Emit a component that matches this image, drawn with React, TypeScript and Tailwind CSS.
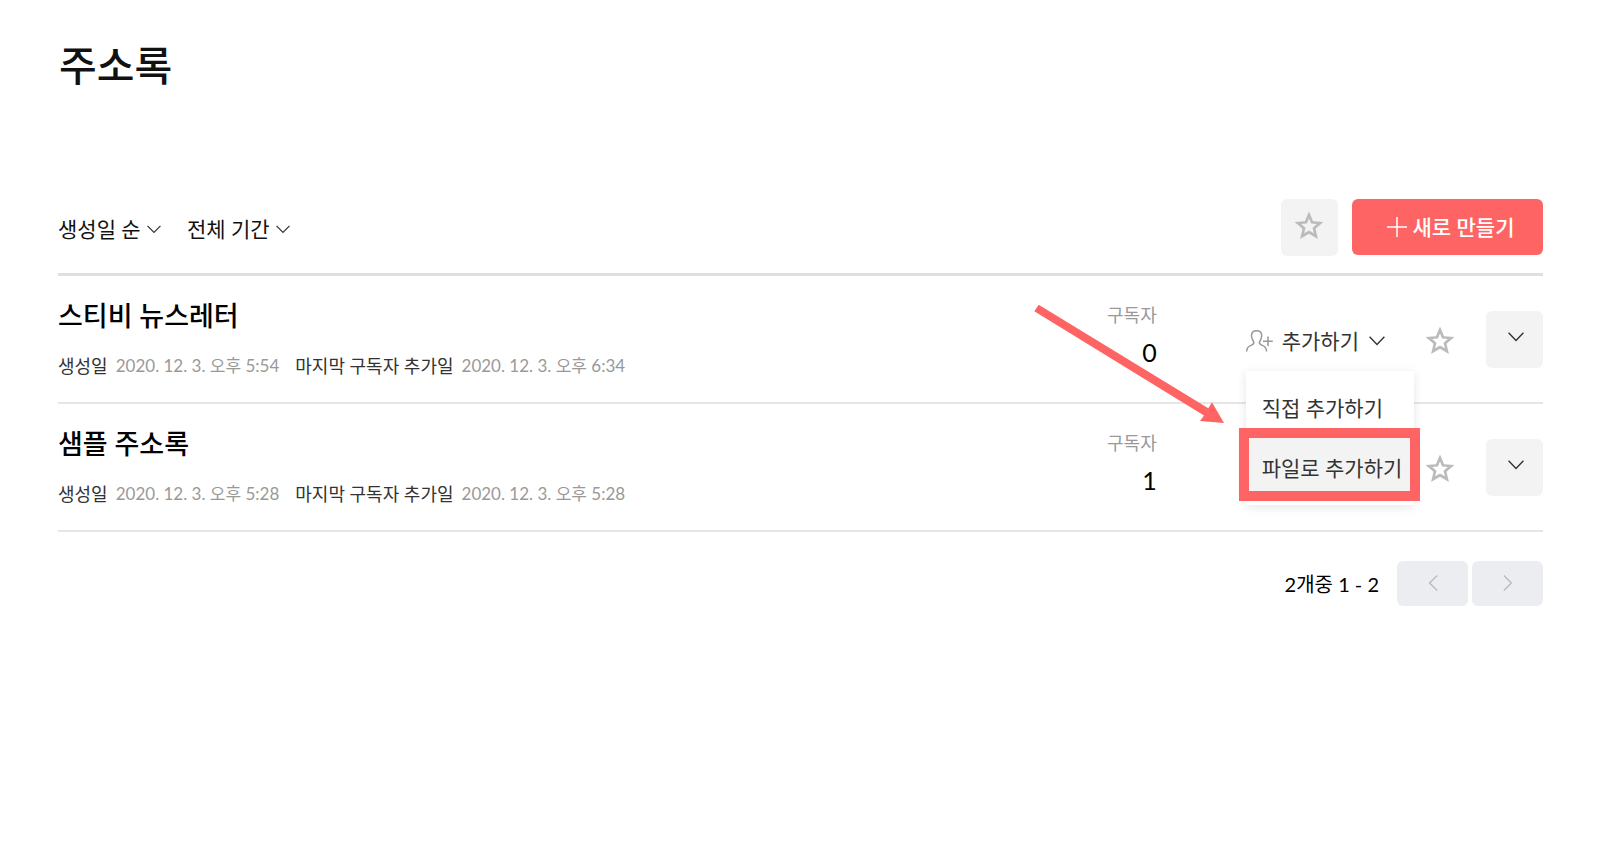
import React from "react";

type AddressBook = {
  name: string;
  createdAt: string;
  lastAddedAt: string;
  subscribers: number;
  menuOpen: boolean;
};

const books: AddressBook[] = [
  {
    name: "스티비 뉴스레터",
    createdAt: "2020. 12. 3. 오후 5:54",
    lastAddedAt: "2020. 12. 3. 오후 6:34",
    subscribers: 0,
    menuOpen: true,
  },
  {
    name: "샘플 주소록",
    createdAt: "2020. 12. 3. 오후 5:28",
    lastAddedAt: "2020. 12. 3. 오후 5:28",
    subscribers: 1,
    menuOpen: false,
  },
];

function Chevron({ className }: { className?: string }) {
  return (
    <svg
      viewBox="0 0 16 10"
      fill="none"
      stroke="currentColor"
      strokeWidth="1.4"
      className={className}
      aria-hidden="true"
    >
      <path d="M0.6 0.8 8 8.4 15.4 0.8" />
    </svg>
  );
}

function UserPlus() {
  return (
    <svg
      viewBox="0 0 28 22"
      fill="none"
      stroke="currentColor"
      strokeWidth="1.5"
      className="w-7 h-[22px] text-[#999999]"
      aria-hidden="true"
    >
      <path d="M0.7 21.4C0.7 17.6 2.2 16.4 5 15.4C7 14.6 7.9 14 7.9 12.6C7.9 11.4 5.5 9.6 5.5 5.8C5.5 2.6 7.6 0.7 10.6 0.7S15.7 2.6 15.7 5.8C15.7 9.6 13.3 11.4 13.3 12.6C13.3 14 14.2 14.6 16.2 15.4C19 16.4 20.5 17.6 20.5 21.4" />
      <path d="M17 11.3H26.8M22 6.4V16.2" />
    </svg>
  );
}

function Star() {
  return (
    <svg
      viewBox="0 0 24 24"
      fill="currentColor"
      className="size-[34px] text-[#bbbbbb]"
      aria-hidden="true"
    >
      <path
        fillRule="evenodd"
        d="M22.2 9.2 14.9 8.6 12 1.8 9.1 8.6 1.8 9.2 7.4 14 5.7 21.2 12 17.4 18.3 21.2 16.6 14ZM12 15.1 8.6 17.1 9.5 13.2 6.5 10.6 10.5 10.3 12 6.7 13.5 10.3 17.5 10.6 14.5 13.2 15.4 17.1Z"
      />
    </svg>
  );
}

function FilterSelect({ label, value }: { label: string; value: string }) {
  return (
    <div className="flex items-center">
      <select
        aria-label={label}
        className="bg-transparent pr-5 h-10 text-[21px] leading-10 appearance-none"
      >
        <option>{value}</option>
      </select>
      <Chevron className="-ml-[14px] w-[14px] h-[9px] text-[#333333] pointer-events-none" />
    </div>
  );
}

function AddMenu() {
  return (
    <div
      role="menu"
      className="top-[46px] left-0 z-10 absolute bg-white shadow-[0_2px_10px_rgba(0,0,0,0.1)] py-[7px] w-[168px] text-[#333333] text-[21px]"
    >
      <button role="menuitem" className="block px-4 w-full h-[60px] text-left whitespace-nowrap">
        직접 추가하기
      </button>
      <div className="relative">
        <button
          role="menuitem"
          className="block bg-[#f3f3f3] px-4 w-full h-[60px] text-left whitespace-nowrap"
        >
          파일로 추가하기
        </button>
        <div className="-top-[10px] -right-[6px] -bottom-[3px] -left-[7px] absolute border-[#ff6464] border-[10px] pointer-events-none" />
      </div>
      {/* arrow pointing at the highlighted item */}
      <svg
        viewBox="0 0 192 120"
        fill="#ff6464"
        className="-top-[67px] right-[190px] absolute w-[192px] h-[120px] pointer-events-none"
        aria-hidden="true"
      >
        <path d="M6.7 0.7 176.3 104.3 180 98.3 192 119 168 117 172 111.5 2.3 7.3Z" />
      </svg>
    </div>
  );
}

function BookRow({ book, covered }: { book: AddressBook; covered: boolean }) {
  return (
    <li className="flex items-center border-[#e6e6e6] border-b-2 h-32">
      <div className="flex-1 min-w-0">
        <h2 className="font-medium text-[27px] text-black leading-9">{book.name}</h2>
        <dl className="flex mt-[18px] text-[18px] leading-7">
          <dt className="text-[#333333]">생성일</dt>
          <dd className="ml-2 text-[#999999] text-[17px]">{book.createdAt}</dd>
          <dt className="ml-4 text-[#333333]">마지막 구독자 추가일</dt>
          <dd className="ml-2 text-[#999999] text-[17px]">{book.lastAddedAt}</dd>
        </dl>
      </div>

      <div className="mr-[89px] pb-[10px] text-right">
        <p className="text-[#999999] text-[18px] leading-7">구독자</p>
        <p className="mt-[7px] text-[25px] text-black leading-8">{book.subscribers}</p>
      </div>

      <div className="relative mt-1 mr-[38px]">
        <button
          aria-haspopup="menu"
          aria-expanded={book.menuOpen}
          className={`flex items-center h-8 text-[#333333] text-[21px] whitespace-nowrap ${
            covered ? "invisible" : "visible"
          }`}
        >
          <UserPlus />
          <span className="ml-2">추가하기</span>
          <Chevron className="ml-[10px] w-4 h-[10px]" />
        </button>
        {book.menuOpen && <AddMenu />}
      </div>

      <button aria-label="즐겨찾기" className="mt-1 mr-[29px]">
        <Star />
      </button>
      <button
        aria-label="더 보기"
        className="flex justify-center items-center bg-[#f3f3f3] pb-1 pl-[2px] rounded-md size-[57px] text-[#333333]"
      >
        <Chevron className="w-4 h-[10px]" />
      </button>
    </li>
  );
}

export default function App() {
  return (
    <main className="bg-white pt-9 pr-[57px] pl-[58px] min-h-screen font-['Lato','Noto_Sans_CJK_KR',sans-serif] text-[#111111]">
      <h1 className="pl-px font-medium text-[41px] leading-[60px]">주소록</h1>

      <div className="flex justify-between items-center mt-[103px] pb-[17px] border-[#dedee3] border-b-[3px]">
        <div className="flex gap-[26px] pt-[3px]">
          <FilterSelect label="정렬" value="생성일 순" />
          <FilterSelect label="기간" value="전체 기간" />
        </div>
        <div className="flex gap-[14px]">
          <button
            aria-label="즐겨찾기만 보기"
            className="flex justify-center items-center bg-[#f3f3f3] pr-[2px] pb-1 rounded-md size-[57px]"
          >
            <Star />
          </button>
          <button className="flex justify-center items-center gap-[6px] bg-[#ff6464] pl-[6px] rounded-md w-[191px] h-14 font-medium text-[21px] text-white">
            <svg
              viewBox="0 0 20 20"
              stroke="currentColor"
              strokeWidth="1.5"
              className="size-5"
              aria-hidden="true"
            >
              <path d="M0 10H20M10 0V20" />
            </svg>
            새로 만들기
          </button>
        </div>
      </div>

      <ul>
        {books.map((book, i) => (
          <BookRow key={book.name} book={book} covered={i > 0 && books[i - 1].menuOpen} />
        ))}
      </ul>

      <nav className="flex justify-end items-center gap-1 mt-[29px]" aria-label="페이지">
        <span className="mr-[14px] text-[20px] text-black">2개중 1 - 2</span>
        <button
          aria-label="이전"
          className="flex justify-center items-center bg-[#ecedf1] pb-[2px] rounded-md w-[71px] h-[45px] text-[#bbbbbb]"
        >
          <Chevron className="w-4 h-[10px] rotate-90" />
        </button>
        <button
          aria-label="다음"
          className="flex justify-center items-center bg-[#ecedf1] pb-[2px] rounded-md w-[71px] h-[45px] text-[#bbbbbb]"
        >
          <Chevron className="w-4 h-[10px] -rotate-90" />
        </button>
      </nav>
    </main>
  );
}
